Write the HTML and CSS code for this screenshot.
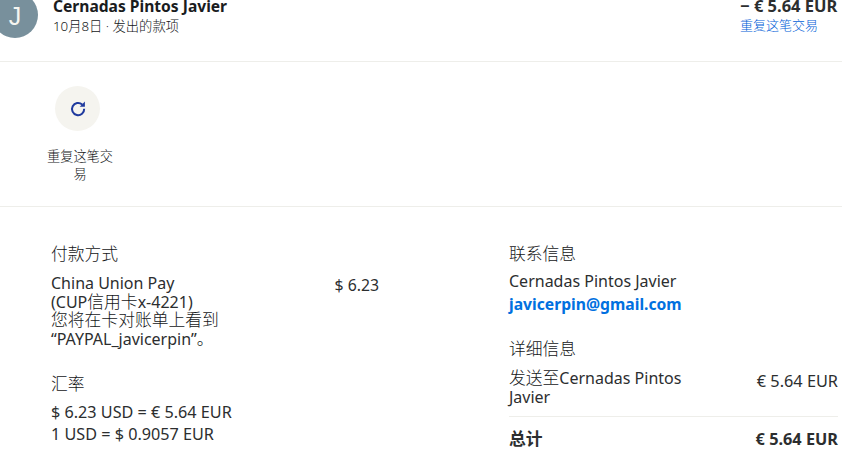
FILE: index.html
```html
<!DOCTYPE html>
<html lang="en">
<head>
    <meta charset="UTF-8">
    <meta name="viewport" content="width=device-width, initial-scale=1.0">
    <title>交易详情</title>
    <link rel="stylesheet" href="styles.css">
</head>
<body>

    <div class="page">
        <div class="summary">
            <div class="avatar">J</div>
            <div class="summary-info">
                <div class="summary-name">Cernadas Pintos Javier</div>
                <div class="summary-date">10月8日 · 发出的款项</div>
            </div>
            <div class="summary-amount">
                <div class="summary-total">− € 5.64 EUR</div>
                <a class="repeat-link" href="#">重复这笔交易</a>
            </div>
        </div>

        <div class="actions">
            <div class="action">
                <div class="action-icon">
                    <svg width="20" height="20" viewBox="0 0 20 20" fill="none">
                        <path d="M16.2 9.8a6.1 6.1 0 1 1-2-4.3" stroke="#1f3a9e" stroke-width="2"/>
                        <path d="M16.9 2.6v5.2h-5.2z" fill="#1f3a9e"/>
                    </svg>
                </div>
                <div class="action-label">重复这笔交易</div>
            </div>
        </div>

        <div class="details">
            <div class="col-left">
                <h3 class="section-title">付款方式</h3>
                <div class="payment-row">
                    <div class="payment-text">China Union Pay<br>(CUP<span class="cjk">信用卡</span>x-4221)<br><span class="cjk">您将在卡对账单上看到</span><br>“PAYPAL_javicerpin”<span class="cjk">。</span></div>
                    <div class="payment-amount">$ 6.23</div>
                </div>
                <h3 class="section-title rate-title">汇率</h3>
                <div class="rate-line">$ 6.23 USD = € 5.64 EUR</div>
                <div class="rate-line">1 USD = $ 0.9057 EUR</div>
            </div>
            <div class="col-right">
                <h3 class="section-title">联系信息</h3>
                <div class="contact-name">Cernadas Pintos Javier</div>
                <a class="contact-email" href="#">javicerpin@gmail.com</a>
                <h3 class="section-title detail-title">详细信息</h3>
                <div class="detail-row">
                    <div class="detail-text"><span class="cjk">发送至</span>Cernadas Pintos Javier</div>
                    <div class="detail-amount">€ 5.64 EUR</div>
                </div>
                <div class="total-row">
                    <div class="total-label">总计</div>
                    <div>€ 5.64 EUR</div>
                </div>
            </div>
        </div>
    </div>

</body>
</html>
```

FILE: styles.css
```css
html, body {
    margin: 0;
    height: 460px;
    overflow: hidden;
    background: #fff;
}

body {
    font-family: "Noto Sans", "Noto Sans CJK SC", sans-serif;
    color: #2c2e2f;
    font-size: 16px;
}

/* page is scrolled, the header is cut off at the top */
.page {
    margin-top: -8px;
}

.cjk {
    font-size: 16.8px;
    font-weight: 300;
    color: #141618;
}

.summary {
    display: flex;
    height: 69px;
    border-bottom: 1px solid #eeeeea;
}

.avatar {
    width: 46px;
    height: 46px;
    margin-left: -8px;
    border-radius: 50%;
    background: #78909c;
    color: #f5f5f0;
    font-family: "Liberation Sans", sans-serif;
    font-size: 25px;
    line-height: 48px;
    text-align: center;
    flex-shrink: 0;
}

.summary-info {
    margin-left: 15px;
    flex: 1;
}

.summary-name {
    font-size: 15.6px;
    font-weight: 700;
    line-height: 18px;
    margin-top: 5px;
    color: #1a1c1e;
}

.summary-date {
    font-size: 13.3px;
    font-weight: 300;
    line-height: 18px;
    margin-top: 2px;
    color: #141618;
}

.summary-amount {
    width: 102px;
}

.summary-total {
    font-size: 16.5px;
    font-weight: 700;
    line-height: 18px;
    margin-top: 5px;
    white-space: nowrap;
}

.repeat-link {
    display: block;
    font-size: 13px;
    font-weight: 300;
    line-height: 18px;
    margin-top: 1px;
    color: #0060d8;
    text-decoration: none;
}

.actions {
    display: flex;
    height: 144px;
    padding-left: 43px;
    border-bottom: 1px solid #eeeeea;
}

.action {
    width: 74px;
    padding-top: 24px;
    text-align: center;
}

.action-icon {
    width: 45px;
    height: 45px;
    margin-left: 12px;
    border-radius: 50%;
    background: #f5f4ef;
    display: flex;
    align-items: center;
    justify-content: center;
}

.action-label {
    margin-top: 16px;
    font-size: 13.2px;
    font-weight: 300;
    line-height: 18px;
    color: #141618;
}

.details {
    display: flex;
    padding: 35px 4px 0 51px;
}

.col-left {
    width: 328px;
    margin-right: 130px;
    flex-shrink: 0;
}

.col-right {
    flex: 1;
}

.section-title {
    margin: 0;
    font-size: 16.8px;
    font-weight: 300;
    line-height: 24px;
    color: #141618;
}

.payment-row {
    display: flex;
    justify-content: space-between;
    margin-top: 8px;
    font-size: 16px;
    line-height: 18.7px;
}

.payment-amount {
    padding-top: 2px;
    font-size: 15.8px;
}

.rate-title {
    margin-top: 23px;
}

.rate-line {
    font-size: 16.2px;
    line-height: 22px;
}

.rate-title + .rate-line {
    margin-top: 5px;
}

.contact-name {
    margin-top: 4px;
    line-height: 23px;
}

.contact-email {
    display: block;
    font-size: 15.7px;
    font-weight: 700;
    line-height: 22px;
    color: #0070e0;
    text-decoration: none;
}

.detail-title {
    margin-top: 22px;
}

.detail-row {
    display: flex;
    justify-content: space-between;
    margin-top: 7px;
    padding-bottom: 9px;
    border-bottom: 1px solid #eeeeea;
    line-height: 19px;
    font-size: 16px;
}

.detail-text {
    width: 190px;
}

.detail-amount {
    padding-top: 4px;
    font-size: 16.3px;
}

.total-row {
    display: flex;
    justify-content: space-between;
    margin-top: 10px;
    font-size: 16.3px;
    font-weight: 700;
    line-height: 24px;
}

.total-label {
    font-size: 16.8px;
}
```
